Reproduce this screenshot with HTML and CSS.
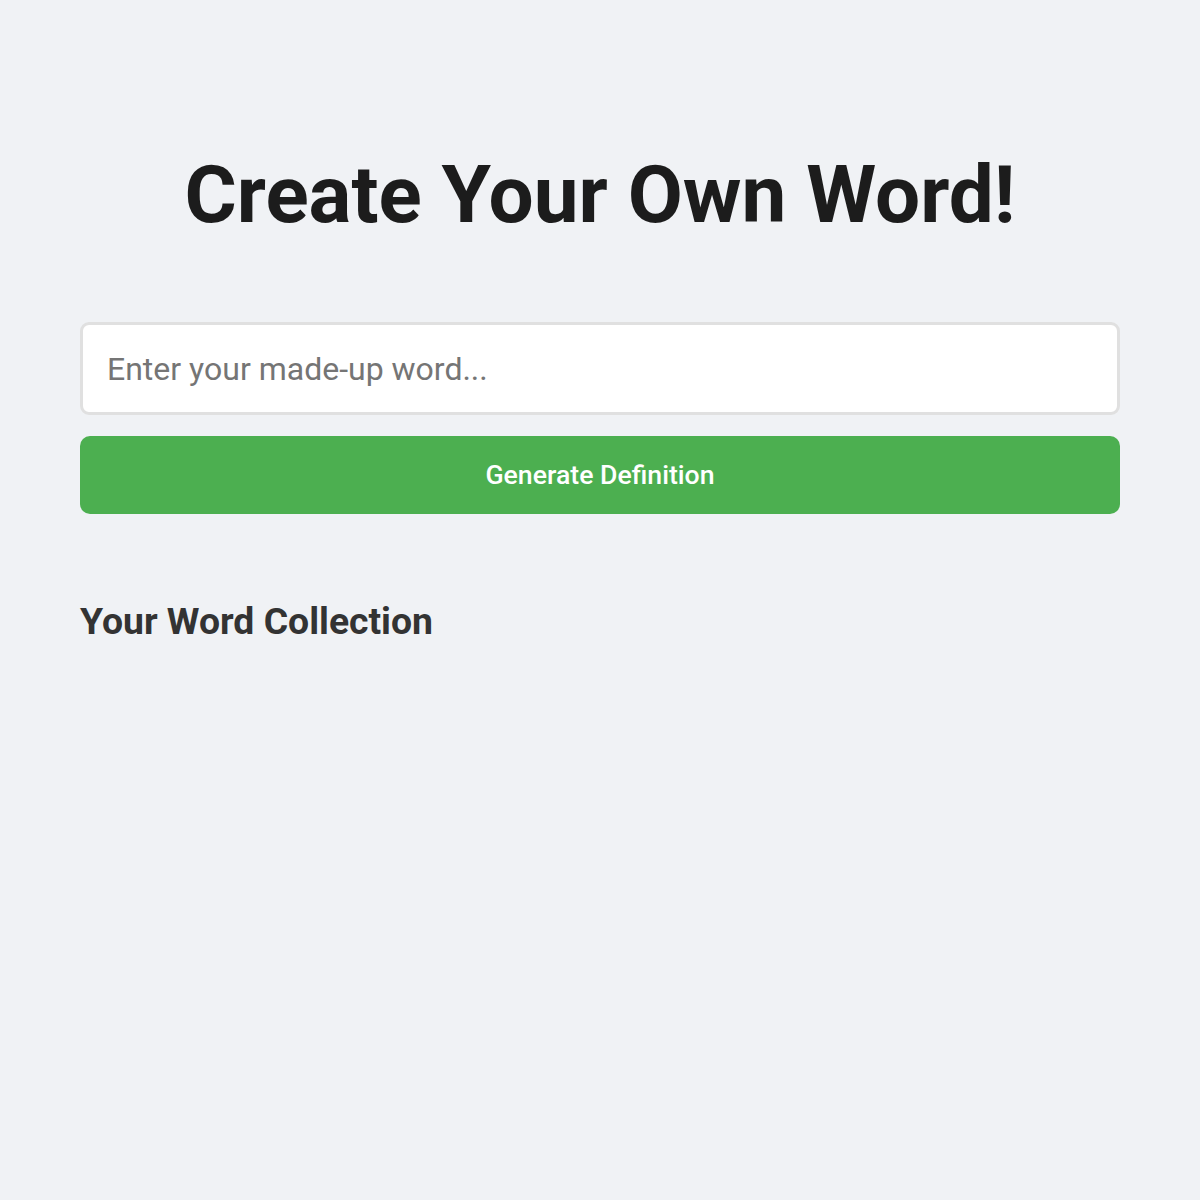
FILE: index.html
```html
<!DOCTYPE html>
<html lang="en">
<head>
<meta charset="utf-8">
<title>Create Your Own Word!</title>
<link rel="stylesheet" href="styles.css">
</head>
<body>
<main class="app">
  <h1 class="title">Create Your Own Word!</h1>
  <form class="word-form">
    <input class="word-input" type="text" placeholder="Enter your made-up word...">
    <button class="generate-btn" type="button">Generate Definition</button>
  </form>
  <section class="collection">
    <h2 class="collection-title">Your Word Collection</h2>
  </section>
</main>
</body>
</html>
```

FILE: styles.css
```css
html, body {
  margin: 0;
  padding: 0;
  background: #f0f2f5;
  font-family: Roboto, "Liberation Sans", Arial, sans-serif;
}

.app {
  padding: 148px 80px 60px;
  display: flex;
  flex-direction: column;
}

.title {
  margin: 0 0 80px;
  font-size: 80px;
  font-weight: 700;
  line-height: 94px;
  text-align: center;
  color: #1c1c1c;
}

.word-form {
  display: flex;
  flex-direction: column;
  gap: 21px;
}

.word-input {
  box-sizing: border-box;
  height: 93px;
  width: 100%;
  padding: 0 24px;
  border: 3px solid #e0e0e0;
  border-radius: 9px;
  background: #ffffff;
  font-family: Roboto, "Liberation Sans", Arial, sans-serif;
  font-size: 32px;
  color: #333;
  outline: none;
}

.word-input::placeholder {
  color: #757575;
}

.generate-btn {
  height: 78px;
  width: 100%;
  border: none;
  border-radius: 10px;
  background: #4caf50;
  color: #ffffff;
  font-family: Roboto, "Liberation Sans", Arial, sans-serif;
  font-size: 26.67px;
  font-weight: 500;
  cursor: pointer;
}

.collection {
  margin-top: 85px;
}

.collection-title {
  margin: 0;
  font-size: 37.33px;
  line-height: 44px;
  font-weight: 700;
  color: #333333;
}
```
